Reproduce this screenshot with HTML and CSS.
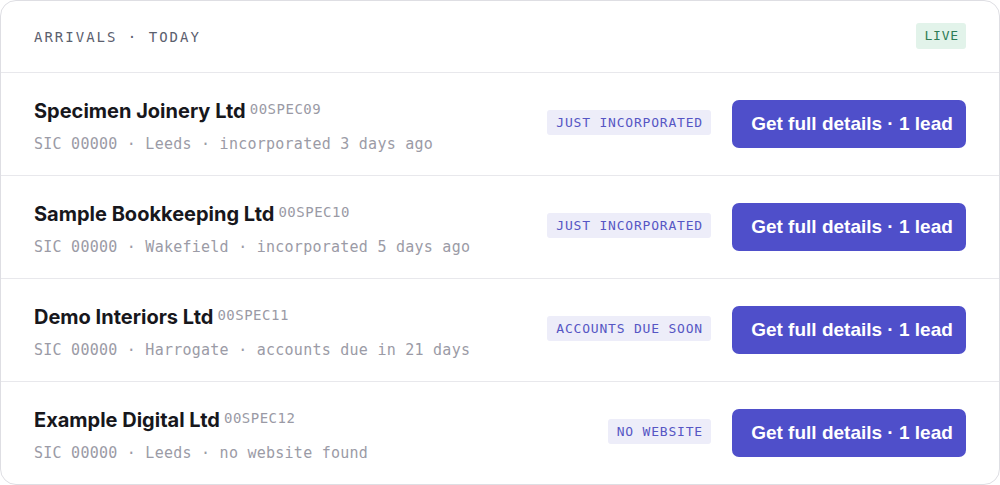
FILE: index.html
```html
<!DOCTYPE html>
<html>
<head>
<meta charset="utf-8">
<link rel="stylesheet" href="styles.css">
</head>
<body>
<div class="card">
  <div class="head">
    <span class="title">ARRIVALS · TODAY</span>
    <span class="live">LIVE</span>
  </div>
  <div class="row">
    <div class="info">
      <div class="nameline"><span class="name">Specimen Joinery Ltd</span><span class="code">00SPEC09</span></div>
      <div class="sub">SIC 00000 · Leeds · incorporated 3 days ago</div>
    </div>
    <span class="tag">JUST INCORPORATED</span>
    <button class="cta">Get full details · 1 lead</button>
  </div>
  <div class="row">
    <div class="info">
      <div class="nameline"><span class="name">Sample Bookkeeping Ltd</span><span class="code">00SPEC10</span></div>
      <div class="sub">SIC 00000 · Wakefield · incorporated 5 days ago</div>
    </div>
    <span class="tag">JUST INCORPORATED</span>
    <button class="cta">Get full details · 1 lead</button>
  </div>
  <div class="row">
    <div class="info">
      <div class="nameline"><span class="name">Demo Interiors Ltd</span><span class="code">00SPEC11</span></div>
      <div class="sub">SIC 00000 · Harrogate · accounts due in 21 days</div>
    </div>
    <span class="tag">ACCOUNTS DUE SOON</span>
    <button class="cta">Get full details · 1 lead</button>
  </div>
  <div class="row last">
    <div class="info">
      <div class="nameline"><span class="name">Example Digital Ltd</span><span class="code">00SPEC12</span></div>
      <div class="sub">SIC 00000 · Leeds · no website found</div>
    </div>
    <span class="tag">NO WEBSITE</span>
    <button class="cta">Get full details · 1 lead</button>
  </div>
</div>
</body>
</html>
```
FILE: styles.css
```css
* { box-sizing: border-box; }
html, body { margin: 0; padding: 0; background: #fff; }
body { width: 1000px; height: 485px; }
.card {
  width: 1000px;
  height: 485px;
  border: 1px solid #dedee3;
  border-radius: 16px;
  overflow: hidden;
  display: flex;
  flex-direction: column;
  background: #fff;
}
.head {
  height: 72px;
  flex: none;
  display: flex;
  align-items: center;
  justify-content: space-between;
  padding: 0 33px;
  border-bottom: 1px solid #e8e8ec;
}
.title {
  font-family: "DejaVu Sans Mono", monospace;
  font-size: 14px;
  letter-spacing: 2px;
  color: #5b606e;
}
.live {
  font-family: "DejaVu Sans Mono", monospace;
  font-size: 13px;
  letter-spacing: 0.8px;
  color: #2f7d57;
  background: #e2f3ea;
  border-radius: 3px;
  padding: 5px 7px 6px 8px;
  margin-top: -2px;
}
.row {
  height: 103px;
  flex: none;
  display: flex;
  align-items: center;
  padding: 0 33px;
  border-bottom: 1px solid #e8e8ec;
}
.row.last { border-bottom: none; flex: 1; }
.info {
  flex: 1;
  display: flex;
  flex-direction: column;
  gap: 12px;
  margin-top: 3px;
}
.nameline { display: flex; align-items: baseline; gap: 4px; }
.name {
  font-family: Inter, "Liberation Sans", sans-serif;
  font-weight: 700;
  font-size: 20px;
  color: #17171c;
}
.code {
  font-family: "DejaVu Sans Mono", monospace;
  font-size: 14px;
  letter-spacing: 0.5px;
  color: #9a9aa5;
  position: relative;
  top: -4px;
}
.sub {
  font-family: "DejaVu Sans Mono", monospace;
  font-size: 15px;
  letter-spacing: 0.25px;
  color: #9b9ba6;
}
.tag {
  font-family: "DejaVu Sans Mono", monospace;
  font-size: 13px;
  letter-spacing: 0.8px;
  color: #5656c4;
  background: #ededf9;
  border-radius: 3px;
  padding: 5px 8px 5px 9px;
  margin-right: 21px;
  margin-top: -3px;
}
.cta {
  width: 234px;
  height: 48px;
  border: none;
  border-radius: 7px;
  background: #4f4fca;
  color: #fff;
  font-family: "Liberation Sans", Arial, sans-serif;
  font-weight: 700;
  font-size: 19px;
  padding: 0 0 0 6px;
}
```
